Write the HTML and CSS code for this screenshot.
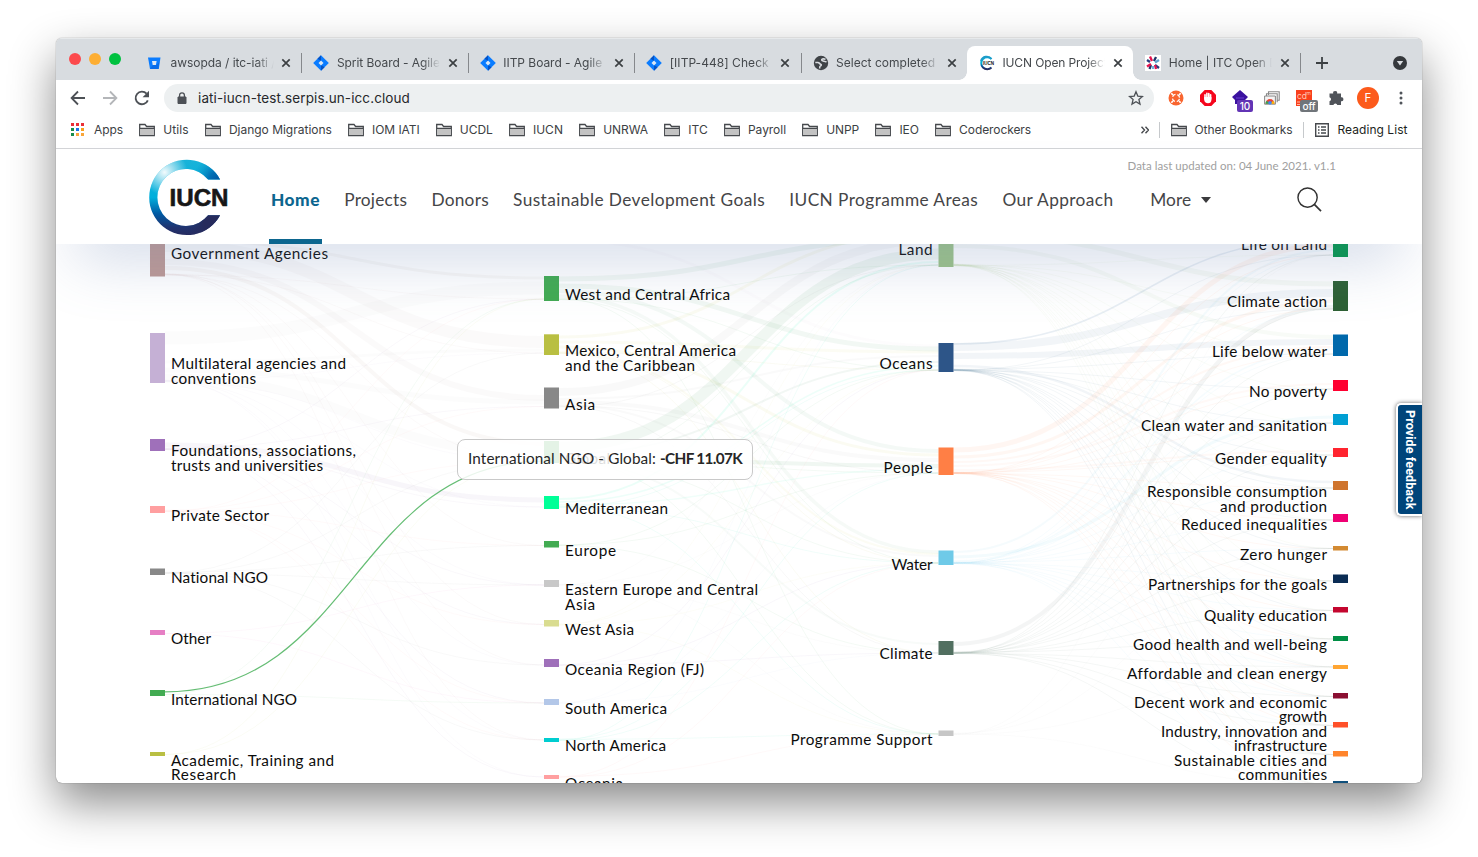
FILE: index.html
```html
<!DOCTYPE html>
<html lang="en">
<head>
<meta charset="utf-8">
<title>IUCN Open Project Portal</title>
<link rel="stylesheet" href="styles.css">
</head>
<body>
<svg class="defs" width="0" height="0" aria-hidden="true">
  <symbol id="folder" viewBox="0 0 16 14"><path d="M.7 12.6V1.5H6l1.6 2h7.7v9.1z" fill="#fff" stroke="#46494d" stroke-width="1.3"/><path d="M1.4 6h13.2v6H1.4z" fill="#c3c3c3"/><path d="M1 5.4h14" stroke="#46494d" stroke-width="1.1"/></symbol>
  <symbol id="x" viewBox="0 0 10 10"><path d="M1.3 1.3l7.4 7.4M8.7 1.3L1.3 8.7" stroke="#3c4043" stroke-width="1.7"/></symbol>
  <symbol id="jira" viewBox="0 0 16 16"><path d="M8 .2L15.8 8 8 15.8.2 8z" fill="#0a7cff"/><path d="M8 .2L4.4 3.8 8 6zM8 15.8l3.600-3.600L8 10z" fill="#0552c4"/><path d="M8 5.500L10.500 8 8 10.500 5.500 8z" fill="#dbe8f5"/></symbol>
</svg>

<div class="window">
  <div class="tabstrip">
    <div class="lights"><i class="red"></i><i class="amber"></i><i class="green"></i></div>
    <div class="tabs">
      <div class="tab"><svg class="fav" viewBox="0 0 16 16"><path d="M1 2.500h12.500L11.800 14H3z" fill="#0a7cff"/><path d="M9.500 10l2.800-3-1 7H3l3-4z" fill="#0560d8" opacity=".6"/><path d="M5 6h4.600l-.7 4H5.700z" fill="#dbe8f5"/></svg><span class="title"><span data-w="105">awsopda / itc-iati /</span></span><svg class="close"><use href="#x"/></svg></div>
      <div class="tab"><svg class="fav"><use href="#jira"/></svg><span class="title"><span data-w="103">Sprit Board - Agile</span></span><svg class="close"><use href="#x"/></svg></div>
      <div class="tab"><svg class="fav"><use href="#jira"/></svg><span class="title"><span data-w="110">IITP Board - Agile B</span></span><svg class="close"><use href="#x"/></svg></div>
      <div class="tab"><svg class="fav"><use href="#jira"/></svg><span class="title"><span data-w="99">[IITP-448] Check</span></span><svg class="close"><use href="#x"/></svg></div>
      <div class="tab plain"><svg class="fav" viewBox="0 0 16 16"><circle cx="8" cy="8" r="7.200" fill="#3f4347"/><path d="M2.300 7.500h2.500c1.800 0 1.500 1.500 3 1.700.8.200.6 1.600-.5 1.900-.7.200-.6 1.700-.6 2.300" fill="none" stroke="#dadde1" stroke-width="1.600"/><path d="M12.500 4.200c-2.600-.7-4-.2-3.800 1 .2 1.100 3.300.8 4.800 1.900" fill="none" stroke="#dadde1" stroke-width="1.600"/></svg><span class="title"><span data-w="99">Select completed</span></span><svg class="close"><use href="#x"/></svg></div>
      <div class="tab active"><svg class="fav" viewBox="0 0 16 16"><path d="M12.500 4A6 6 0 1 0 12.500 12.500" fill="none" stroke="url(#ringBase)" stroke-width="2"/><path d="M2 6A6 6 0 0 1 12.500 4" fill="none" stroke="#1c9cc9" stroke-width="2"/><text x="4" y="10" class="favtext">IUCN</text></svg><span class="title"><span data-w="105">IUCN Open Project</span></span><svg class="close"><use href="#x"/></svg></div>
      <div class="tab"><svg class="fav" viewBox="0 0 16 16"><path fill="#fff" d="M0 0h16v16H0z"/><g stroke-width="2.300"><path d="M2 5l3 2M10 10l4 3" stroke="#273a7c"/><path d="M5 1.500L7 6M10 10l1 4" stroke="#e5134f"/><path d="M11 2L9 6M6 10l-1.500 4" stroke="#1f3468"/><path d="M14 5l-4 2.500" stroke="#5ea4cf"/><path d="M6 9l-4 2.500" stroke="#e5134f"/><path d="M8 11v3" stroke="#6fb2dc"/></g></svg><span class="title"><span data-w="109">Home | ITC Open D</span></span><svg class="close"><use href="#x"/></svg></div>
    </div>
    <svg class="plus" viewBox="0 0 12 12"><path d="M6 0v12M0 6h12" stroke="#3c4043" stroke-width="1.800"/></svg>
    <svg class="tabmenu" viewBox="0 0 14 14"><circle cx="7" cy="7" r="7" fill="#35383c"/><path d="M3.800 5h6.400L7 9.600z" fill="#dadde1"/></svg>
  </div>

  <div class="toolbar">
    <svg class="nav16" viewBox="0 0 16 16"><path d="M15 8H2M8 1.500L1.600 8 8 14.500" fill="none" stroke="#4d5156" stroke-width="1.800"/></svg>
    <svg class="nav16" viewBox="0 0 16 16"><path d="M1 8h13M8 1.500L14.400 8 8 14.500" fill="none" stroke="#b4b6b9" stroke-width="1.800"/></svg>
    <svg class="nav16" viewBox="0 0 16 16"><path d="M13.800 10.300A6.300 6.300 0 1 1 12.600 3.700" fill="none" stroke="#4d5156" stroke-width="1.900"/><path d="M15 .8v6.400H8.600z" fill="#4d5156"/></svg>
    <div class="omnibox">
      <svg class="lock" viewBox="0 0 10 12"><path d="M1 5h8v6.500H1z" fill="#4d5156" stroke="#4d5156"/><path d="M2.600 5V3.200a2.400 2.400 0 0 1 4.800 0V5" fill="none" stroke="#4d5156" stroke-width="1.300"/></svg>
      <span class="url" data-w="212">iati-iucn-test.serpis.un-icc.cloud</span>
      <svg class="star" viewBox="0 0 16 16"><path d="M8 1.800l1.800 4.300 4.600.4-3.500 3 1.100 4.600L8 11.700l-4 2.400 1.100-4.600-3.500-3 4.600-.4z" fill="none" stroke="#4d5156" stroke-width="1.300"/></svg>
    </div>
    <div class="extensions">
      <svg viewBox="0 0 16 16"><circle cx="8" cy="8" r="7.500" fill="#f9652f"/><circle cx="8" cy="8" r="3.600" fill="none" stroke="#fff" stroke-width="1.300" stroke-dasharray="3.700 1.955" stroke-dashoffset="4.678"/><path d="M3.300 3.300l1.600 1.600M12.700 3.300l-1.600 1.600M3.300 12.700l1.600-1.600M12.700 12.700l-1.600-1.600" stroke="#fff" stroke-width="1.600"/></svg>
      <svg viewBox="0 0 16 16"><path d="M4.700 0h6.600L16 4.700v6.600L11.300 16H4.700L0 11.300V4.700z" fill="#f5061c"/><path d="M5 9V4.700M6.900 8V3.400M8.800 8V3.600M10.600 9V4.800" stroke="#fff" stroke-width="1.600" stroke-linecap="round"/><path d="M4.200 7h7.200v3c0 2-1.400 3.300-3.400 3.300-2.200 0-3.800-1.600-3.800-3.600z" fill="#fff"/></svg>
      <span class="ext"><svg viewBox="0 0 16 16"><path d="M8 0l8 7-3 3v4H3v-4L0 7z" fill="#3b12a0"/><path d="M4 8h8" stroke="#6b3fd0" stroke-width="1"/></svg><b class="badge violet">10</b></span>
      <svg viewBox="0 0 16 16"><path d="M4.500 5V1.800h10.700v8.500H13" fill="none" stroke="#888" stroke-width="1.100"/><path d="M2.500 7V3.800h10.700v8.500" fill="none" stroke="#888" stroke-width="1.100"/><path d="M.6 6h10.800v8.200H.6z" fill="#f3f3f3" stroke="#888"/><path d="M1.500 13.700a4.500 4.700 0 0 1 9 0z" fill="#e94435"/><path d="M1.500 13.700a4.500 4.500 0 0 1 1.200-3l3.300 3z" fill="#34a853"/><path d="M10.500 13.700A4.500 4.500 0 0 0 9.300 10.700L6 13.700z" fill="#fbbc05"/><circle cx="6" cy="12.700" r="1.800" fill="#4285f4"/></svg>
      <span class="ext"><svg viewBox="0 0 16 16"><path fill="#f9401c" d="M0 0h16v16H0z"/><text x="1" y="9" class="cdm">cd</text><text x="10.500" y="5" class="cdm small">m</text><path d="M1 12h3M1 14.500h3" stroke="#ffb9a5"/></svg><b class="badge gray">off</b></span>
      <svg viewBox="0 0 16 16"><path d="M1.500 3.500h3.700a2 2 0 1 1 3.900 0H13v3.800a2 2 0 1 1 0 3.900V15H9.300a2 2 0 0 0-3.900 0H1.500v-3.800a2 2 0 0 0 0-3.900z" fill="#50545a"/></svg>
    </div>
    <span class="avatar">F</span>
    <svg class="dots" viewBox="0 0 4 14"><g fill="#50545a"><circle cx="2" cy="2" r="1.500"/><circle cx="2" cy="7" r="1.500"/><circle cx="2" cy="12" r="1.500"/></g></svg>
  </div>

  <div class="bookmarks">
    <div class="bm apps"><svg viewBox="0 0 13 13"><g><path d="M0 0h3v3H0zM5 0h3v3H5zM10 0h3v3h-3z" fill="#ea2f37"/><path d="M0 5h3v3H0z" fill="#188d4c"/><path d="M5 5h3v3H5z" fill="#1a73e8"/><path d="M10 5h3v3h-3z" fill="#f9a01b"/><path d="M0 10h3v3H0z" fill="#188d4c"/><path d="M5 10h3v3H5zM10 10h3v3h-3z" fill="#f9a63a"/></g></svg><span data-w="29">Apps</span></div>
    <div class="bm"><svg><use href="#folder"/></svg><span data-w="25.500">Utils</span></div>
    <div class="bm"><svg><use href="#folder"/></svg><span data-w="103">Django Migrations</span></div>
    <div class="bm"><svg><use href="#folder"/></svg><span data-w="47.500">IOM IATI</span></div>
    <div class="bm"><svg><use href="#folder"/></svg><span data-w="33">UCDL</span></div>
    <div class="bm"><svg><use href="#folder"/></svg><span data-w="30">IUCN</span></div>
    <div class="bm"><svg><use href="#folder"/></svg><span data-w="45">UNRWA</span></div>
    <div class="bm"><svg><use href="#folder"/></svg><span data-w="19.500">ITC</span></div>
    <div class="bm"><svg><use href="#folder"/></svg><span data-w="38">Payroll</span></div>
    <div class="bm"><svg><use href="#folder"/></svg><span data-w="33">UNPP</span></div>
    <div class="bm"><svg><use href="#folder"/></svg><span data-w="19.500">IEO</span></div>
    <div class="bm"><svg><use href="#folder"/></svg><span data-w="72">Coderockers</span></div>
    <div class="bm-end">
      <svg class="more" viewBox="0 0 8 8"><path d="M.5.800L3.500 4l-3 3.200M4.500.800L7.500 4l-3 3.200" fill="none" stroke="#46494d" stroke-width="1.400"/></svg>
      <i class="rule"></i>
      <div class="bm"><svg><use href="#folder"/></svg><span data-w="98">Other Bookmarks</span></div>
      <i class="rule"></i>
      <div class="bm reading"><svg viewBox="0 0 14 14"><path d="M.7.700h12.600v12.600H.7z" fill="none" stroke="#46494d" stroke-width="1.400"/><path d="M3 4h1.500M3 7h1.500M3 10h1.500M6 4h5M6 7h5M6 10h5" stroke="#46494d" stroke-width="1.300"/></svg><span data-w="70">Reading List</span></div>
    </div>
  </div>

  <header class="site">
    <svg class="logo" viewBox="149 157 82 80">
      <defs>
        <linearGradient id="ringBase" x1="0" y1="0" x2="0" y2="1"><stop offset="0" stop-color="#19b3d9"/><stop offset=".5" stop-color="#00afdc"/><stop offset=".72" stop-color="#0059a3"/><stop offset=".9" stop-color="#20336f"/><stop offset="1" stop-color="#262b60"/></linearGradient>
        <radialGradient id="shine" gradientUnits="userSpaceOnUse" cx="164" cy="172" r="23"><stop offset="0" stop-color="#fff" stop-opacity=".95"/><stop offset="1" stop-color="#fff" stop-opacity="0"/></radialGradient>
        <radialGradient id="deep" gradientUnits="userSpaceOnUse" cx="219" cy="181" r="27"><stop offset="0" stop-color="#00529f"/><stop offset=".4" stop-color="#0070b5"/><stop offset="1" stop-color="#0093cb" stop-opacity="0"/></radialGradient>
        <radialGradient id="navy" gradientUnits="userSpaceOnUse" cx="214" cy="222" r="28"><stop offset=".4" stop-color="#262b5c"/><stop offset="1" stop-color="#262b5c" stop-opacity="0"/></radialGradient>
        <path id="ring" d="M219.500 179.200A37.700 37.700 0 1 0 219.500 215L207.500 215A28.500 28.500 0 1 1 207.500 179.200Z"/>
      </defs>
      <g transform="translate(.6 .3)"><use href="#ring" fill="url(#ringBase)"/><use href="#ring" fill="url(#shine)"/><use href="#ring" fill="url(#deep)"/><use href="#ring" fill="url(#navy)"/></g>
      <text class="logotext" x="169.500" y="206.400" textLength="59" lengthAdjust="spacingAndGlyphs">IUCN</text>
    </svg>
    <nav>
      <a class="current"><span data-w="49">Home</span></a>
      <a><span data-w="63">Projects</span></a>
      <a><span data-w="57.500">Donors</span></a>
      <a><span data-w="252">Sustainable Development Goals</span></a>
      <a><span data-w="189">IUCN Programme Areas</span></a>
      <a><span data-w="111">Our Approach</span></a>
      <a class="moreitem"><span data-w="41">More</span><i class="caret"></i></a>
    </nav>
    <div class="side">
      <span class="updated" data-w="208.500">Data last updated on: 04 June 2021. v1.1</span>
      <svg class="search" viewBox="0 0 26 26"><circle cx="11" cy="11" r="10" fill="none" stroke="#333" stroke-width="1.500"/><path d="M18 18l7 7" stroke="#333" stroke-width="1.800"/></svg>
    </div>
  </header>

  <main class="flow">
    <svg id="sankey" viewBox="56 244 1366 539"></svg>
    <div class="tip"><span data-w="192">International NGO - Global:&nbsp;</span><b data-w="82">-CHF 11.07K</b></div>
    <div class="feedback"><span data-w="99.500">Provide feedback</span></div>
  </main>
</div>
<script src="app.js"></script>
</body>
</html>
```

FILE: styles.css
```css
* { box-sizing: border-box; }
body { margin: 0; height: 857px; overflow: hidden; background: #fff; padding: 38px 56px 0; font-family: Inter, "Liberation Sans", sans-serif; }
svg { display: block; flex: none; }
.defs { position: absolute; }
[data-w] { display: inline-block; white-space: nowrap; }

.window { width: 1366px; height: 745px; border-radius: 6px; overflow: hidden; background: #fff; display: flex; flex-direction: column; box-shadow: 0 0 1px rgba(0,0,0,.65), 0 20px 46px rgba(0,0,0,.46); }

.tabstrip { height: 42px; flex: none; background: #d8dce0; display: flex; align-items: flex-end; border-top: 1px solid #e6e9eb; padding-right: 15px; }
.lights { display: flex; gap: 8px; width: 79px; padding-left: 13px; align-self: flex-start; margin-top: 14px; }
.lights i { width: 12px; height: 12px; border-radius: 50%; }
.red { background: #fc4a4d; }
.amber { background: #fdae33; }
.green { background: #00c140; }
.tabs { display: flex; height: 34px; }
.tab { width: 166.400px; display: flex; align-items: center; padding-left: 12px; position: relative; }
.tab::after { content: ""; position: absolute; right: -1px; top: 7px; width: 1px; height: 20px; background: #85888c; }
.tab.plain::after, .tab.active::after { display: none; }
.fav { width: 16px; height: 16px; }
.favtext { font: 700 4.500px "Liberation Sans", sans-serif; fill: #111; }
.title { margin-left: 7.500px; width: 103px; overflow: hidden; font-size: 12px; line-height: 18px; color: #45494d; -webkit-mask-image: linear-gradient(90deg, #000 83%, transparent 100%); mask-image: linear-gradient(90deg, #000 83%, transparent 100%); }
.close { width: 10px; height: 10px; margin-left: 7.700px; }
.tab.active { background: #fff; border-radius: 8px 8px 0 0; }
.tab.active::before { content: ""; position: absolute; left: -8px; right: -8px; bottom: 0; height: 8px; background: radial-gradient(circle at 0 0, transparent 7.500px, #fff 8px) left / 8px 8px no-repeat, radial-gradient(circle at 100% 0, transparent 7.500px, #fff 8px) right / 8px 8px no-repeat; }
.plus { width: 12px; height: 12px; margin: 0 0 11px 16px; }
.tabmenu { width: 14px; height: 14px; margin: 0 0 10px auto; }

.toolbar { height: 36px; flex: none; display: flex; align-items: center; padding-left: 14px; }
.nav16 { width: 16px; height: 16px; margin-right: 16px; }
.nav16:nth-child(3) { margin-right: 14px; }
.omnibox { width: 990px; height: 28px; border-radius: 14px; background: #edf0f1; display: flex; align-items: center; padding: 0 10px 0 13px; }
.lock { width: 10px; height: 12px; }
.url { font-size: 13.500px; line-height: 20px; color: #26282b; margin-left: 11px; }
.star { width: 16px; height: 16px; margin-left: auto; }
.extensions { display: flex; gap: 16px; margin-left: 14px; }
.extensions svg { width: 16px; height: 16px; }
.ext { position: relative; }
.badge { position: absolute; left: 5px; top: 10px; height: 12px; padding: 0 2px; min-width: 16px; text-align: center; border-radius: 2px; color: #fff; font: 500 10px/12px Inter, sans-serif; }
.violet { background: #6234b5; }
.gray { background: #70757a; left: 4px; min-width: 18px; }
.cdm { font: 8.500px Inter, sans-serif; fill: #ffc7b5; }
.cdm.small { font-size: 5px; }
.avatar { width: 22px; height: 22px; margin-left: 13px; border-radius: 50%; background: #fc5a1b; color: #fff; font-size: 11.500px; line-height: 22px; text-align: center; }
.dots { width: 4px; height: 14px; margin-left: 19.500px; }

.bookmarks { height: 33px; flex: none; display: flex; padding: 0 14.500px 5px 15px; gap: 16.200px; align-items: center; border-bottom: 1px solid #d3d4d7; font-size: 12px; line-height: 18px; color: #3c4043; }
.bm { display: flex; gap: 8px; align-items: center; flex: none; }
.bm svg { width: 16px; height: 14px; }
.bm.apps { gap: 10px; }
.bm.apps svg { width: 13px; height: 13px; }
.bm-end { display: flex; align-items: center; gap: 10.500px; margin-left: auto; }
.more { width: 8px; height: 8px; }
.rule { width: 1px; height: 16px; background: #c6c9cc; }
.bm.reading { gap: 9px; color: #1d1f22; }
.bm.reading svg { width: 14px; height: 14px; }

.site { height: 95px; flex: none; position: relative; z-index: 1; background: #fff; display: flex; padding: 0 86px 0 93px; box-shadow: 0 35px 60px -20px rgba(100,125,175,.300); font-family: Lato, "Liberation Sans", sans-serif; font-variant-ligatures: none; }
.logo { width: 82px; height: 80px; margin-top: 8px; }
.logotext { font: 700 24.500px "Liberation Sans", Arial, sans-serif; fill: #171717; stroke: #171717; stroke-width: .6; }
nav { display: flex; gap: 24.200px; width: 945px; flex: none; margin: 0 -120px 0 40px; font-size: 17.300px; color: #454547; }
nav a { line-height: 101px; height: 95px; display: block; }
.current { font-weight: 900; color: #0c668f; position: relative; }
.current::after { content: ""; position: absolute; left: -2px; right: -2px; bottom: 0; height: 5px; background: #0c668f; }
.moreitem { display: flex; align-items: flex-start; margin-left: 12.500px; gap: 10px; }
.caret { border: 5px solid transparent; border-top: 6px solid #3b3b3d; border-bottom: 0; margin-top: 48px; }
.side { margin-left: auto; display: flex; flex-direction: column; align-items: flex-end; padding-top: 9px; }
.updated { font-size: 11.500px; line-height: 16px; color: #a0a0a0; }
.search { width: 25px; height: 25px; margin: 13px 14.500px 0 0; }

.flow { height: 539px; position: relative; font-variant-ligatures: none; }
#sankey { width: 1366px; height: 539px; }
.label { font: 15.300px Lato, "Liberation Sans", sans-serif; font-variant-ligatures: none; fill: #0c0c0c; }
.tip { position: absolute; left: 401px; top: 195px; width: 296px; height: 41px; border: 1px solid #c9c9c9; border-radius: 8px; background: rgba(255,255,255,.86); display: flex; padding: 0 0 3px 10px; align-items: center; font: 15.300px Lato, "Liberation Sans", sans-serif; font-variant-ligatures: none; color: #262626; }
.feedback { position: absolute; right: 0; top: 159px; width: 26px; height: 113px; background: #00457a; border: 2px solid #fff; border-right: 0; border-radius: 5px 0 0 5px; box-shadow: 0 0 4px rgba(0,0,0,.6); writing-mode: vertical-rl; display: flex; align-items: center; justify-content: center; font: 700 12.500px Roboto, sans-serif; color: #fff; }
```

FILE: app.js
```js
// Letter-spacing is tuned so each label fills its allotted width.
document.querySelectorAll('[data-w]').forEach(el => {
  const target = parseFloat(el.dataset.w);
  const vertical = !!el.closest('.feedback');
  const box = el.getBoundingClientRect();
  const size = vertical ? box.height : box.width;
  el.style.letterSpacing = ((target - size) / el.textContent.length) + 'px';
});

const svg = document.getElementById('sankey');
const NS = 'http://www.w3.org/2000/svg';
function add(tag, attrs, text) {
  const e = document.createElementNS(NS, tag);
  for (const k in attrs) e.setAttribute(k, attrs[k]);
  if (text) e.textContent = text;
  svg.appendChild(e);
}
function link(x0, y0, x1, y1, w, color, opacity) {
  const m = (x0 + x1) / 2;
  add('path', { d: `M${x0} ${y0}C${m} ${y0} ${m} ${y1} ${x1} ${y1}`, fill: 'none', stroke: color, 'stroke-width': w, 'stroke-opacity': opacity });
}

// Nodes per column: [top, bottom, colour, [label, baseline, width]...]
const cols = [
  { x: 150, tx: 171, nodes: [
    [225, 276.5, '#be9a95', ['Government Agencies', 259, 157]],
    [333, 383, '#c5b0d5', ['Multilateral agencies and', 369, 175], ['conventions', 384, 85]],
    [439, 451, '#9f70ba', ['Foundations, associations,', 456, 185], ['trusts and universities', 471, 152]],
    [506, 513, '#ff9fa0', ['Private Sector', 521, 98]],
    [568.5, 575, '#888', ['National NGO', 583, 97]],
    [630, 635, '#e67fc4', ['Other', 644, 40]],
    [690, 696, '#42ab52', ['International NGO', 705, 126]],
    [752, 756, '#b9bf42', ['Academic, Training and', 766, 163], ['Research', 780, 65]]] },
  { x: 544, tx: 565, nodes: [
    [276, 301, '#42ab52', ['West and Central Africa', 300, 165]],
    [334.3, 355, '#b9bf42', ['Mexico, Central America', 356, 171], ['and the Caribbean', 371, 130]],
    [387.500, 408.500, '#888', ['Asia', 410, 30]],
    [441, 463, '#42ab52', ['Global', 464, 45]],
    [496, 509, '#00ff98', ['Mediterranean', 514, 103]],
    [541, 547.500, '#42ab52', ['Europe', 556, 51]],
    [580, 587, '#c8c8c8', ['Eastern Europe and Central', 595, 193], ['Asia', 610, 30]],
    [620, 626.500, '#d9dc90', ['West Asia', 635, 69]],
    [659, 667, '#9f70ba', ['Oceania Region (FJ)', 675, 139]],
    [699, 705, '#b3c7e8', ['South America', 714, 102]],
    [738, 742, '#00cdd0', ['North America', 751, 101]],
    [775, 779, '#ff9fa0', ['Oceania', 789, 58]]] },
  { x: 938.500, tx: 932.500, end: true, nodes: [
    [225, 267, '#9dc388', ['Land', 255, 34]],
    [343, 372, '#2d5588', ['Oceans', 369, 53]],
    [447.500, 475, '#ff7f45', ['People', 473, 49]],
    [550.500, 565, '#6fcae8', ['Water', 570, 41]],
    [641, 655, '#516f60', ['Climate', 659, 53]],
    [730.500, 736, '#c6c6c6', ['Programme Support', 745, 142]]] },
  { x: 1333, tx: 1327, end: true, nodes: [
    [230, 257, '#009748', ['Life on Land', 250, 86]],
    [281, 311, '#2d6034', ['Climate action', 307, 100]],
    [334.500, 356, '#0068ab', ['Life below water', 357, 115]],
    [380, 391, '#ff0030', ['No poverty', 397, 78]],
    [414, 425, '#009fd3', ['Clean water and sanitation', 431, 186]],
    [448, 457, '#ff242f', ['Gender equality', 464, 112]],
    [481, 490, '#cf742d', ['Responsible consumption', 497, 180], ['and production', 512, 107]],
    [514, 522, '#ef0073', ['Reduced inequalities', 530, 146]],
    [546, 550.500, '#d38a32', ['Zero hunger', 560, 87]],
    [574.500, 583, '#0a2c54', ['Partnerships for the goals', 590, 179]],
    [607, 612.500, '#c4062f', ['Quality education', 621, 123]],
    [636, 641, '#008e45', ['Good health and well-being', 650, 194]],
    [665, 669, '#ffa532', ['Affordable and clean energy', 679, 200]],
    [693, 698.500, '#8b0f32', ['Decent work and economic', 708, 193], ['growth', 722, 48]],
    [722, 727.500, '#ff5029', ['Industry, innovation and', 737, 166], ['infrastructure', 751, 93]],
    [751, 756.500, '#ff842b', ['Sustainable cities and', 766, 153], ['communities', 780, 89]],
    [781, 787, '#10507c', []]] }
];

// Main flows: [column, y0, y1, width, colour, opacity]
[
  [0, 246, 342, 12, '#97827a', .04], [0, 240, 278, 3, '#a08075', .06], [0, 262, 398, 6, '#97827a', .04],
  [0, 268, 444, 4, '#a06d60', .05], [0, 338, 288, 13, '#8c8894', .025],
  [0, 362, 350, 3, '#8c8894', .025], [0, 370, 402, 5, '#8c8894', .025], [0, 378, 453, 9, '#8c8894', .025],
  [0, 445, 500, 5, '#8f6aac', .06],
  [1, 279, 238, 5, '#4a9f62', .07], [1, 286, 349, 5, '#4a9f62', .07], [1, 291, 451, 4, '#4a9f62', .06],
  [1, 296, 552, 3.500, '#4a9f62', .05], [1, 337, 232, 3, '#c5c945', .07], [1, 342, 352, 3, '#c5c945', .06],
  [1, 347, 455, 3, '#c5c945', .07], [1, 352, 554, 2, '#c5c945', .06], [1, 392, 240, 8, '#888', .05],
  [1, 399, 356, 2, '#888', .04], [1, 402, 460, 4, '#888', .045], [1, 405, 556, 2, '#888', .04],
  [1, 447, 254, 11, '#42935d', .08], [1, 454, 362, 2, '#42935d', .07], [1, 458, 466, 4, '#42935d', .08],
  [1, 461, 644, 2, '#42935d', .04], [1, 499, 262, 2, '#00f0a5', .08], [1, 502, 366, 1.500, '#00f0a5', .07],
  [1, 505, 469, 1.500, '#00f0a5', .06], [1, 240, 346, 3, '#c594b0', .03],
  [2, 234, 284, 5, '#90b87c', .07], [2, 246, 337, 4, '#90b87c', .06],
  [2, 347, 293, 8, '#4477a2', .07], [2, 356, 342, 6, '#4477a2', .07], [2, 366, 482, 2.500, '#4477a2', .07],
  [2, 450, 245, 5, '#ff8a5a', .08], [2, 457, 301, 3, '#ff8a5a', .07], [2, 462, 347, 2, '#ff8a5a', .06],
  [2, 466, 384, 2, '#ff8a5a', .05], [2, 470, 451, 2, '#ff8a5a', .05], [2, 552, 250, 2, '#6bcbe9', .07],
  [2, 557, 417, 3, '#6bcbe9', .08], [2, 561, 349, 1.500, '#6bcbe9', .06], [2, 644, 307, 4, '#77817c', .08],
  [2, 344, 238, 1.500, '#4477a2', .12]
].forEach(f => link(cols[f[0]].x + 15, f[1], cols[f[0] + 1].x, f[2], f[3], f[4], f[5]));

// Minor flows fan out from the lower edge of every node.
for (let c = 0; c < 3; c++) {
  cols[c].nodes.forEach((s, i) => cols[c + 1].nodes.forEach((t, j) => {
    if (c < 2 && (i * 5 + j * 3) % 7 > 3) return;
    if (c === 2 && i === 5 && j % 4) return;
    if (c === 0 && i > 4 && j % 3) return;
    const bright = s[2] === '#00ff98' || s[2] === '#00cdd0';
    link(cols[c].x + 15, s[1] - 1.500 - (j % 3) * .6, cols[c + 1].x, t[1] - 2, 1, bright ? '#00e5b0' : s[2], c === 2 ? .055 : c === 1 ? .06 : .05);
  }));
}
link(165, 691.800, 544, 461, 1.200, '#3eac51', .8);

cols.forEach(c => c.nodes.forEach(([top, bottom, color, ...labels]) => {
  add('rect', { x: c.x, y: top, width: 15, height: bottom - top, fill: color });
  labels.forEach(([text, y, w]) => {
    if (text) add('text', { x: c.tx, y, class: 'label', textLength: w, 'text-anchor': c.end ? 'end' : 'start' }, text);
  });
}));
```
